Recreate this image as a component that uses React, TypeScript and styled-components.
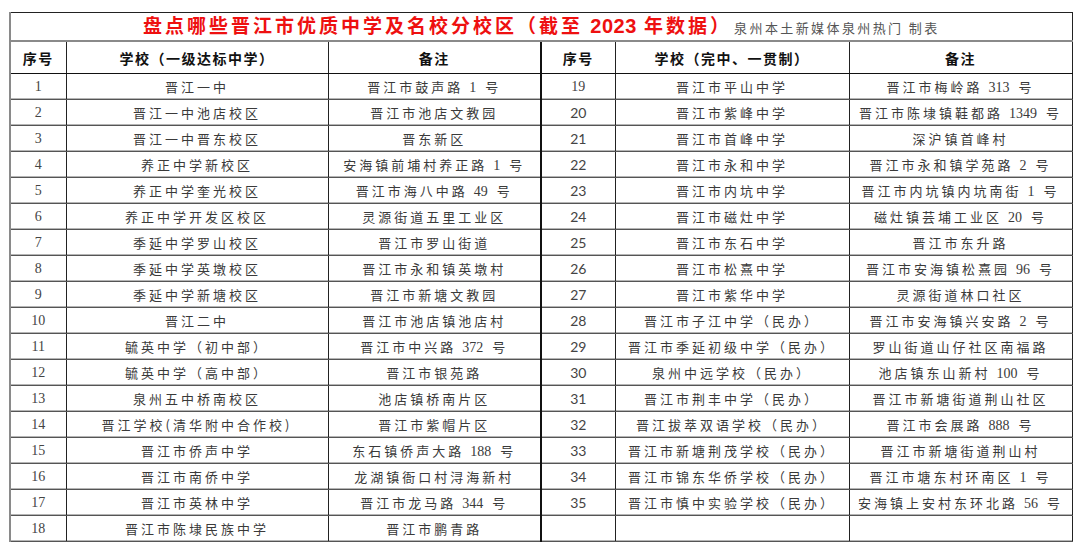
import * as React from 'react';
import styled, { createGlobalStyle } from 'styled-components';

const GlobalStyle = createGlobalStyle`
    html, body {
        margin: 0;
        padding: 0;
        background: #ffffff;
    }
    body {
        font-family: "Noto Sans CJK SC", "Noto Sans", sans-serif;
    }
`;

const Page = styled.div`
    width: 1080px;
    height: 543px;
    padding: 12px 0 0 9px;
    box-sizing: border-box;
    background: #ffffff;
`;

const Table = styled.table`
    width: 1062px;
    border-collapse: collapse;
    table-layout: fixed;
    border: 1px solid #222;
    border-left: 2px solid #8a8a8a;
`;

const TitleCell = styled.td`
    height: 25px;
    padding: 0;
    text-align: center;
    vertical-align: middle;
    white-space: nowrap;
    border-bottom: 2px solid #8a8a8a;
    line-height: 24px;
`;

const TitleMain = styled.span`
    font-family: "Noto Sans CJK SC", sans-serif;
    font-size: 19px;
    font-weight: 700;
    letter-spacing: 3px;
    color: #ee1010;
`;

const TitleDigits = styled.span`
    font-family: "Liberation Sans", sans-serif;
    font-size: 20px;
    letter-spacing: 0.5px;
`;

const TitleSub = styled.span`
    font-family: "Noto Sans CJK SC", sans-serif;
    font-size: 13px;
    letter-spacing: 2.4px;
    color: #555555;
    margin-left: 2px;
`;

const HeadCell = styled.th<{ $split?: boolean; $first?: boolean }>`
    height: 31px;
    padding: 0;
    font-family: "Noto Sans CJK SC", sans-serif;
    font-size: 14px;
    font-weight: 700;
    letter-spacing: 1.5px;
    color: #111111;
    text-align: center;
    vertical-align: middle;
    border-left: ${(p) => (p.$split ? '2px solid #111' : p.$first ? 'none' : '1px solid #222')};
    border-bottom: 1px solid #111;
    white-space: nowrap;
`;

const Row = styled.tr``;

const Cell = styled.td<{ $split?: boolean; $first?: boolean }>`
    height: 25px;
    padding: 0;
    font-family: "Noto Sans CJK SC", sans-serif;
    font-size: 13px;
    letter-spacing: 3px;
    color: #3a3a3a;
    text-align: center;
    vertical-align: middle;
    white-space: nowrap;
    overflow: hidden;
    border-left: ${(p) => (p.$split ? '2px solid #111' : p.$first ? 'none' : '1px solid #222')};
    border-bottom: 1px solid #555;
    box-shadow: inset 0 -1px 0 #b5b5b5;
`;

const NumCell = styled(Cell)<{ $sans?: boolean }>`
    font-family: ${(p) => (p.$sans ? '"Lato", "Open Sans", sans-serif' : '"Liberation Serif", serif')};
    font-size: 14px;
    letter-spacing: 0;
    color: #444;
`;

const Digits = styled.span`
    font-family: "Liberation Serif", serif;
    font-size: 14px;
    letter-spacing: 0;
    margin-right: 3px;
`;

// keep runs of digits tight, as in the printed table
const withDigits = (text: string) =>
    text.split(/(\d+)/).map((part, i) =>
        /^\d+$/.test(part) ? <Digits key={i}>{part}</Digits> : part
    );

type School = [string, string];

const leftSchools: School[] = [
    ['晋江一中', '晋江市鼓声路 1 号'],
    ['晋江一中池店校区', '晋江市池店文教园'],
    ['晋江一中晋东校区', '晋东新区'],
    ['养正中学新校区', '安海镇前埔村养正路 1 号'],
    ['养正中学奎光校区', '晋江市海八中路 49 号'],
    ['养正中学开发区校区', '灵源街道五里工业区'],
    ['季延中学罗山校区', '晋江市罗山街道'],
    ['季延中学英墩校区', '晋江市永和镇英墩村'],
    ['季延中学新塘校区', '晋江市新塘文教园'],
    ['晋江二中', '晋江市池店镇池店村'],
    ['毓英中学（初中部）', '晋江市中兴路 372 号'],
    ['毓英中学（高中部）', '晋江市银苑路'],
    ['泉州五中桥南校区', '池店镇桥南片区'],
    ['晋江学校(清华附中合作校)', '晋江市紫帽片区'],
    ['晋江市侨声中学', '东石镇侨声大路 188 号'],
    ['晋江市南侨中学', '龙湖镇衙口村浔海新村'],
    ['晋江市英林中学', '晋江市龙马路 344 号'],
    ['晋江市陈埭民族中学', '晋江市鹏青路'],
];

const rightSchools: School[] = [
    ['晋江市平山中学', '晋江市梅岭路 313 号'],
    ['晋江市紫峰中学', '晋江市陈埭镇鞋都路 1349 号'],
    ['晋江市首峰中学', '深沪镇首峰村'],
    ['晋江市永和中学', '晋江市永和镇学苑路 2 号'],
    ['晋江市内坑中学', '晋江市内坑镇内坑南街 1 号'],
    ['晋江市磁灶中学', '磁灶镇芸埔工业区 20 号'],
    ['晋江市东石中学', '晋江市东升路'],
    ['晋江市松熹中学', '晋江市安海镇松熹园 96 号'],
    ['晋江市紫华中学', '灵源街道林口社区'],
    ['晋江市子江中学（民办）', '晋江市安海镇兴安路 2 号'],
    ['晋江市季延初级中学（民办）', '罗山街道山仔社区南福路'],
    ['泉州中远学校（民办）', '池店镇东山新村 100 号'],
    ['晋江市荆丰中学（民办）', '晋江市新塘街道荆山社区'],
    ['晋江拔萃双语学校（民办）', '晋江市会展路 888 号'],
    ['晋江市新塘荆茂学校（民办）', '晋江市新塘街道荆山村'],
    ['晋江市锦东华侨学校（民办）', '晋江市塘东村环南区 1 号'],
    ['晋江市慎中实验学校（民办）', '安海镇上安村东环北路 56 号'],
];

const App: React.FC = () => {
    return (
        <Page>
            <GlobalStyle />
            <Table>
                <colgroup>
                    <col style={{ width: 56 }} />
                    <col style={{ width: 262 }} />
                    <col style={{ width: 213 }} />
                    <col style={{ width: 74 }} />
                    <col style={{ width: 234 }} />
                    <col style={{ width: 223 }} />
                </colgroup>
                <tbody>
                    <Row>
                        <TitleCell colSpan={6}>
                            <TitleMain>
                                盘点哪些晋江市优质中学及名校分校区（截至 <TitleDigits>2023</TitleDigits> 年数据）
                            </TitleMain>
                            <TitleSub>泉州本土新媒体泉州热门 制表</TitleSub>
                        </TitleCell>
                    </Row>
                    <Row>
                        <HeadCell $first>序号</HeadCell>
                        <HeadCell>学校（一级达标中学）</HeadCell>
                        <HeadCell>备注</HeadCell>
                        <HeadCell $split>序号</HeadCell>
                        <HeadCell>学校（完中、一贯制）</HeadCell>
                        <HeadCell>备注</HeadCell>
                    </Row>
                    {leftSchools.map((left, i) => {
                        const right = rightSchools[i];
                        return (
                            <Row key={i}>
                                <NumCell $first>{i + 1}</NumCell>
                                <Cell>{left[0]}</Cell>
                                <Cell>{withDigits(left[1])}</Cell>
                                <NumCell $split $sans={i > 0}>{right ? i + 19 : ''}</NumCell>
                                <Cell>{right ? right[0] : ''}</Cell>
                                <Cell>{right ? withDigits(right[1]) : ''}</Cell>
                            </Row>
                        );
                    })}
                </tbody>
            </Table>
        </Page>
    );
};

export default App;
